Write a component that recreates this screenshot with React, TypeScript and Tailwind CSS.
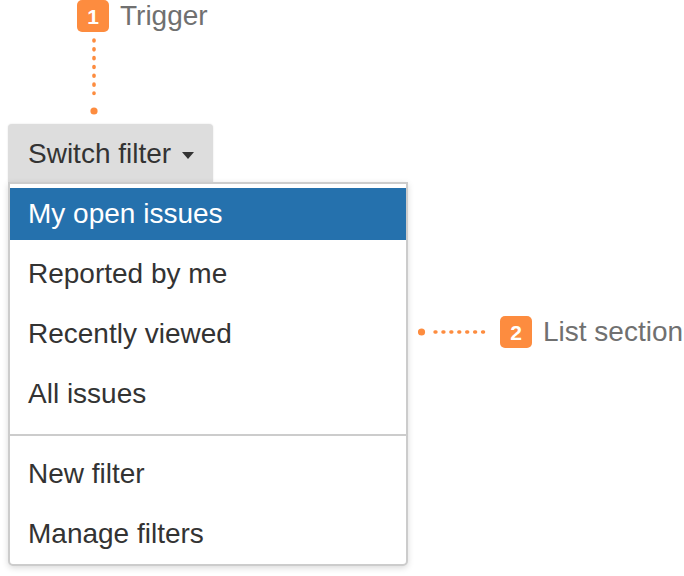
const font = { fontFamily: '"Liberation Sans", Arial, sans-serif' };

function Badge({ n }: { n: string }) {
  return (
    <div className="flex h-8 w-8 items-center justify-center rounded-[5px] bg-[#fd8c3f] text-[21px] font-bold leading-none text-white">
      {n}
    </div>
  );
}

const top = ['My open issues', 'Reported by me', 'Recently viewed', 'All issues'];
const bottom = ['New filter', 'Manage filters'];

function Item({ label, active }: { label: string; active?: boolean }) {
  return (
    <div
      className={
        'flex h-[52px] items-center px-[18px] text-[28px] leading-none ' +
        (active ? 'bg-[#2571ad] text-white' : 'text-[#333333]')
      }
    >
      {label}
    </div>
  );
}

export default function App() {
  return (
    <div className="h-[576px] w-[684px] overflow-hidden bg-white" style={font}>
      {/* trigger annotation */}
      <div className="flex items-center pl-[77px]">
        <Badge n="1" />
        <span className="ml-[11px] text-[28px] leading-8 text-[#707070]">Trigger</span>
      </div>
      <svg width="684" height="92" className="block">
        <line x1="94" y1="8" x2="94" y2="61.5" stroke="#fd8c3f" strokeWidth="3.6" strokeLinecap="round" strokeDasharray="1 7.83" />
        <circle cx="94" cy="79" r="3.6" fill="#fd8c3f" />
      </svg>

      <div className="flex">
        <div className="ml-2 w-[400px]">
          <div className="flex h-[58px] w-[205px] items-center rounded-t-[4px] bg-[#dddddd] pl-[20px] pt-[2px] text-[28px] text-[#333333] shadow-[0_0_2px_rgba(0,0,0,0.12)]">
            <span>Switch filter</span>
            <svg width="12" height="7" viewBox="0 0 12 7" className="ml-[11px] mt-[2px]">
              <path d="M0 0 L12 0 L6 7 Z" fill="#333333" />
            </svg>
          </div>
          <div className="rounded-b-[5px] border-2 border-[#cccccc] bg-white shadow-[0_2px_6px_rgba(0,0,0,0.15)]">
            <div className="flex flex-col gap-2 pb-[14px] pt-1">
              {top.map((t, i) => (
                <Item key={t} label={t} active={i === 0} />
              ))}
            </div>
            <div className="flex flex-col gap-2 border-t-2 border-[#cccccc] pb-1 pt-[12px]">
              {bottom.map((t) => (
                <Item key={t} label={t} />
              ))}
            </div>
          </div>
        </div>

        {/* list section annotation */}
        <div className="ml-[10px] mt-[192px] flex h-8 items-center self-start">
          <svg width="82" height="8" className="block">
            <circle cx="3.5" cy="4" r="3.6" fill="#fd8c3f" />
            <line x1="17" y1="4" x2="72.5" y2="4" stroke="#fd8c3f" strokeWidth="3.4" strokeLinecap="round" strokeDasharray="1 6.93" />
          </svg>
          <Badge n="2" />
          <span className="ml-[11px] whitespace-nowrap text-[28px] leading-8 text-[#707070]">List section</span>
        </div>
      </div>
    </div>
  );
}
